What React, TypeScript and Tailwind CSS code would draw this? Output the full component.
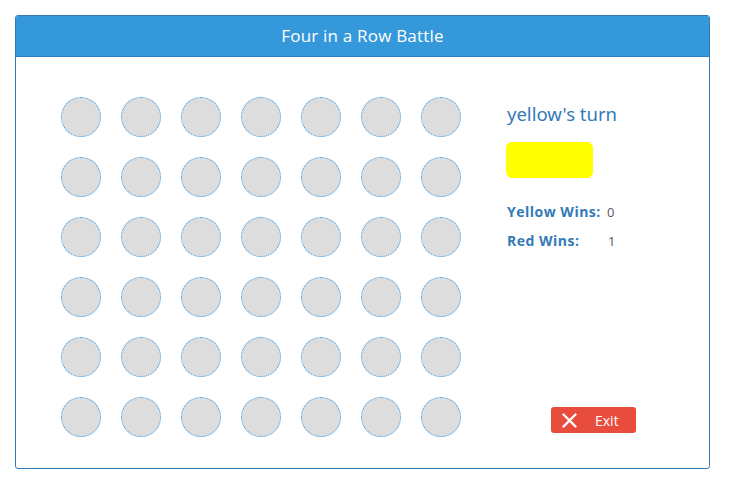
import React from "react";

export default function App() {
  const rows = 6;
  const cols = 7;
  return (
    <div className="w-[736px] h-[497px] bg-white pt-[15px] pl-[15px]" style={{ fontFamily: '"Open Sans", sans-serif' }}>
      <div className="w-[695px] h-[454px] border border-[#337ab7] rounded-[3px] flex flex-col overflow-hidden">
        <div className="h-[41px] bg-[#3498db] border-b border-[#2e7fc0] flex items-center justify-center text-white text-[17px] tracking-[0.2px]">
          Four in a Row Battle
        </div>
        <div className="flex flex-1 pl-[35px] pt-[30px]">
          <div className="grid grid-cols-7 w-[420px] h-[360px]">
            {Array.from({ length: rows * cols }).map((_, i) => (
              <div key={i} className="w-[60px] h-[60px] flex items-center justify-center">
                <div className="w-[40px] h-[40px] rounded-full bg-[#dddddd] border border-dotted border-[#2f9cf0]" />
              </div>
            ))}
          </div>
          <div className="ml-[36px] w-[173px] h-[360px] flex flex-col pt-[16px]">
            <div className="text-[18.5px] text-[#337ab7] leading-[22px]" style={{ fontFamily: '"Noto Sans", sans-serif' }}>yellow's turn</div>
            <div className="mt-[17px] -ml-[1px] w-[87px] h-[36px] bg-[#ffff00] rounded-[6px]" />
            <div className="mt-[25px] flex items-center text-[#337ab7] leading-[18px]">
              <span className="font-bold w-[100px] text-[14px] tracking-[0.5px]">Yellow Wins:</span>
              <span className="text-[#555] text-[13px]">0</span>
            </div>
            <div className="mt-[11px] flex items-center text-[#337ab7] leading-[18px]">
              <span className="font-bold w-[101px] text-[14px] tracking-[0.5px]">Red Wins:</span>
              <span className="text-[#555] text-[13px]">1</span>
            </div>
            <div className="flex-1" />
            <div className="flex justify-center mb-[14px]">
              <button className="w-[85px] h-[26px] bg-[#e74c3c] rounded-[3px] flex items-center text-white text-[14px] pl-[11px]">
                <svg width="15" height="15" viewBox="0 0 15 15" className="mr-[18px]">
                  <path d="M1.5 1.5 L13.5 13.5 M13.5 1.5 L1.5 13.5" stroke="white" strokeWidth="2.4" strokeLinecap="round" />
                </svg>
                Exit
              </button>
            </div>
          </div>
        </div>
      </div>
    </div>
  );
}
